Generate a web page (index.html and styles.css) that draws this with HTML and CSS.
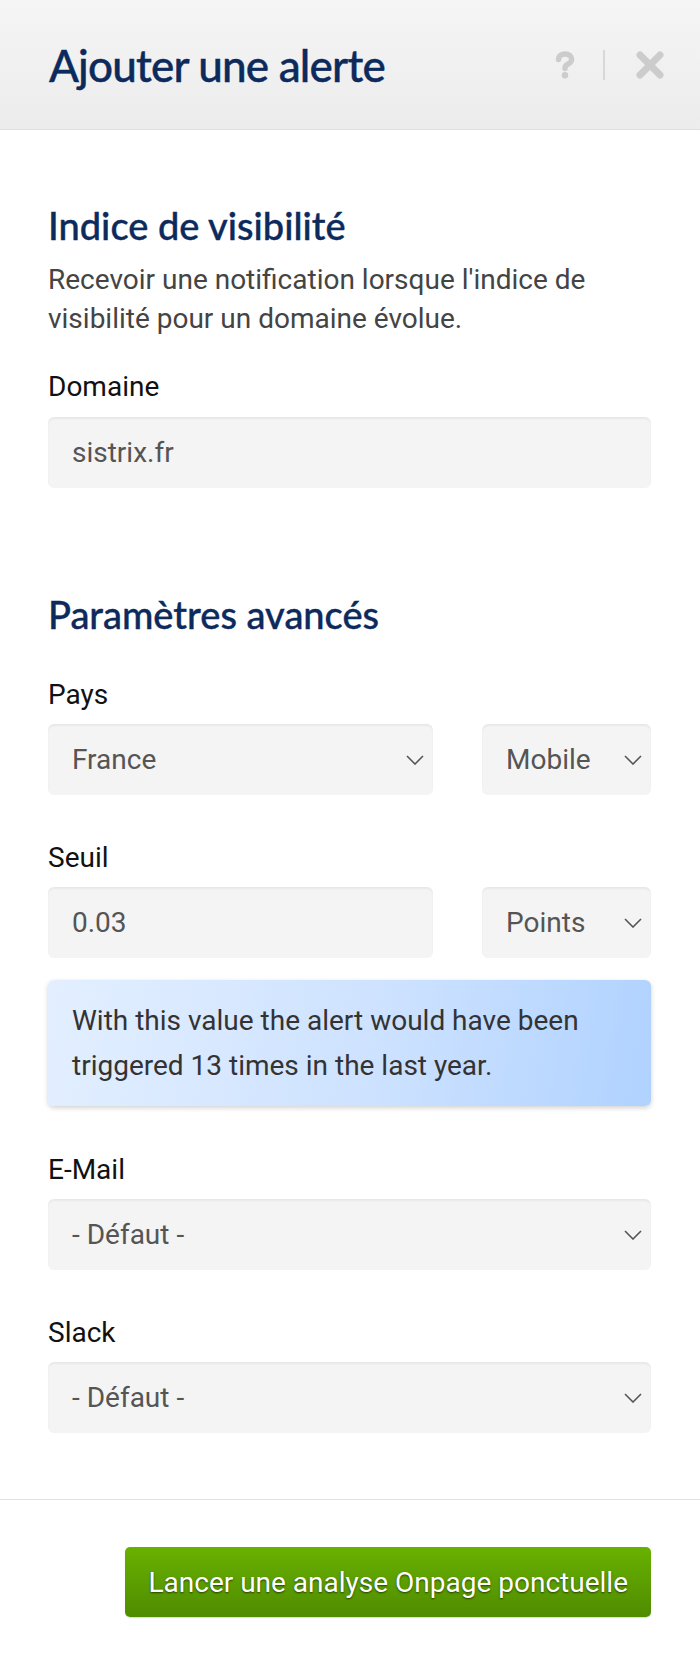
FILE: index.html
```html
<!DOCTYPE html>
<html lang="fr">
<head>
<meta charset="utf-8">
<title>Ajouter une alerte</title>
<link rel="stylesheet" href="styles.css">
</head>
<body>
<div class="modal">
  <header class="modal-header">
    <h1 class="modal-title">Ajouter une alerte</h1>
    <div class="header-actions">
      <svg class="help" viewBox="0 0 22 28" width="22" height="28" aria-label="Aide">
        <path d="M4.5 8.5 C4.5 4.8 7.4 3 11 3 C14.8 3 17.6 5 17.6 8.4 C17.6 11.6 14.6 12.6 12.6 14 C11.4 14.8 11 15.8 11 17.6" stroke="#cccccc" stroke-width="5.4" stroke-linecap="round" fill="none"/>
        <circle cx="11" cy="24.2" r="3.2" fill="#cccccc"/>
      </svg>
      <span class="sep"></span>
      <svg class="close" viewBox="0 0 28 28" width="28" height="28" aria-label="Fermer">
        <path d="M4 4 L24 24 M24 4 L4 24" stroke="#cccccc" stroke-width="7" stroke-linecap="round" fill="none"/>
      </svg>
    </div>
  </header>

  <main class="modal-body">
    <section class="section">
      <h2 class="section-title">Indice de visibilité</h2>
      <p class="desc">Recevoir une notification lorsque l'indice de visibilité pour un domaine évolue.</p>
      <div class="field field-domain">
        <label class="label">Domaine</label>
        <div class="control">sistrix.fr</div>
      </div>
    </section>

    <section class="section section-advanced">
      <h2 class="section-title">Paramètres avancés</h2>

      <div class="field field-first">
        <label class="label">Pays</label>
        <div class="row">
          <div class="control select"><span>France</span><svg class="chev" viewBox="0 0 18 10" width="18" height="10"><path d="M1 1 L9 9 L17 1" stroke="#555" stroke-width="1.6" fill="none"/></svg></div>
          <div class="control select"><span>Mobile</span><svg class="chev" viewBox="0 0 18 10" width="18" height="10"><path d="M1 1 L9 9 L17 1" stroke="#555" stroke-width="1.6" fill="none"/></svg></div>
        </div>
      </div>

      <div class="field">
        <label class="label">Seuil</label>
        <div class="row">
          <div class="control">0.03</div>
          <div class="control select"><span>Points</span><svg class="chev" viewBox="0 0 18 10" width="18" height="10"><path d="M1 1 L9 9 L17 1" stroke="#555" stroke-width="1.6" fill="none"/></svg></div>
        </div>
      </div>

      <div class="info">With this value the alert would have been triggered 13 times in the last year.</div>

      <div class="field field-after-info">
        <label class="label">E-Mail</label>
        <div class="control select"><span>- Défaut -</span><svg class="chev" viewBox="0 0 18 10" width="18" height="10"><path d="M1 1 L9 9 L17 1" stroke="#555" stroke-width="1.6" fill="none"/></svg></div>
      </div>

      <div class="field">
        <label class="label">Slack</label>
        <div class="control select"><span>- Défaut -</span><svg class="chev" viewBox="0 0 18 10" width="18" height="10"><path d="M1 1 L9 9 L17 1" stroke="#555" stroke-width="1.6" fill="none"/></svg></div>
      </div>
    </section>
  </main>

  <footer class="modal-footer">
    <button class="btn-primary" type="button">Lancer une analyse Onpage ponctuelle</button>
  </footer>
</div>
</body>
</html>
```

FILE: styles.css
```css
html, body {
  margin: 0;
  padding: 0;
  background: #ffffff;
}

body {
  width: 700px;
  font-family: Roboto, "Liberation Sans", sans-serif;
  color: #111;
}

.modal {
  width: 700px;
  min-height: 1670px;
  display: flex;
  flex-direction: column;
}

.modal-header {
  height: 130px;
  box-sizing: border-box;
  border-bottom: 1px solid #dedede;
  background: linear-gradient(to bottom, #f5f5f5, #ececec);
  display: flex;
  align-items: center;
  justify-content: space-between;
  padding: 0 36px 0 49px;
}

.modal-title {
  margin: 0;
  font-family: Lato, "Open Sans", sans-serif;
  font-weight: 500;
  font-size: 44px;
  line-height: 52px;
  letter-spacing: -0.8px;
  color: #0c2a5c;
  -webkit-text-stroke: 0.4px #0c2a5c;
}

.header-actions {
  display: flex;
  align-items: center;
}

.help {
  display: block;
}

.sep {
  width: 2px;
  height: 30px;
  background: #d8d8d8;
  margin: 0 31px 0 27px;
}

.close {
  display: block;
}

.modal-body {
  padding: 73px 49px 66px 48px;
  border-bottom: 1px solid #e2e2e2;
}

.section-title {
  margin: 0;
  font-family: Lato, "Open Sans", sans-serif;
  font-weight: 500;
  font-size: 38px;
  line-height: 44px;
  color: #0c2a5c;
  -webkit-text-stroke: 0.4px #0c2a5c;
}

.desc {
  margin: 14px 0 0;
  font-size: 28px;
  line-height: 38.5px;
  color: #444;
}

.section-advanced {
  margin-top: 104px;
}

.field {
  margin-top: 47px;
}

.field-domain {
  margin-top: 33px;
}

.field-first {
  margin-top: 43px;
}

.field-after-info {
  margin-top: 48px;
}

.label {
  display: block;
  font-size: 28px;
  line-height: 32px;
  color: #111;
  margin-bottom: 13px;
}

.field-domain .label {
  margin-bottom: 14px;
}

.control {
  height: 71px;
  box-sizing: border-box;
  background: #f4f4f4;
  border-radius: 6px;
  box-shadow: inset 0 2px 2px rgba(0, 0, 0, 0.05);
  padding: 0 9px 0 24px;
  display: flex;
  align-items: center;
  font-size: 28px;
  color: #555;
}

.select {
  justify-content: space-between;
}

.chev {
  display: block;
  flex: none;
}

.row {
  display: grid;
  grid-template-columns: 1fr 169px;
  column-gap: 49px;
}

.info {
  margin-top: 22px;
  padding: 18px 24px;
  border-radius: 6px;
  background: linear-gradient(100deg, #e3efff 0%, #cde2ff 55%, #b0d2ff 100%);
  box-shadow: 0 2px 5px rgba(0, 0, 0, 0.18);
  font-size: 28px;
  line-height: 45px;
  color: #333;
}

.modal-footer {
  display: flex;
  justify-content: flex-end;
  padding: 47px 49px 0 0;
}

.btn-primary {
  height: 70px;
  padding: 0 23px;
  border: none;
  border-radius: 5px;
  background: linear-gradient(to bottom, #69b100, #4f8c00);
  box-shadow: 0 1px 1px rgba(0, 0, 0, 0.15);
  color: #fff;
  font-family: Roboto, "Liberation Sans", sans-serif;
  font-size: 28px;
  text-shadow: 0 1px 2px rgba(0, 0, 0, 0.6);
  cursor: pointer;
}
```
